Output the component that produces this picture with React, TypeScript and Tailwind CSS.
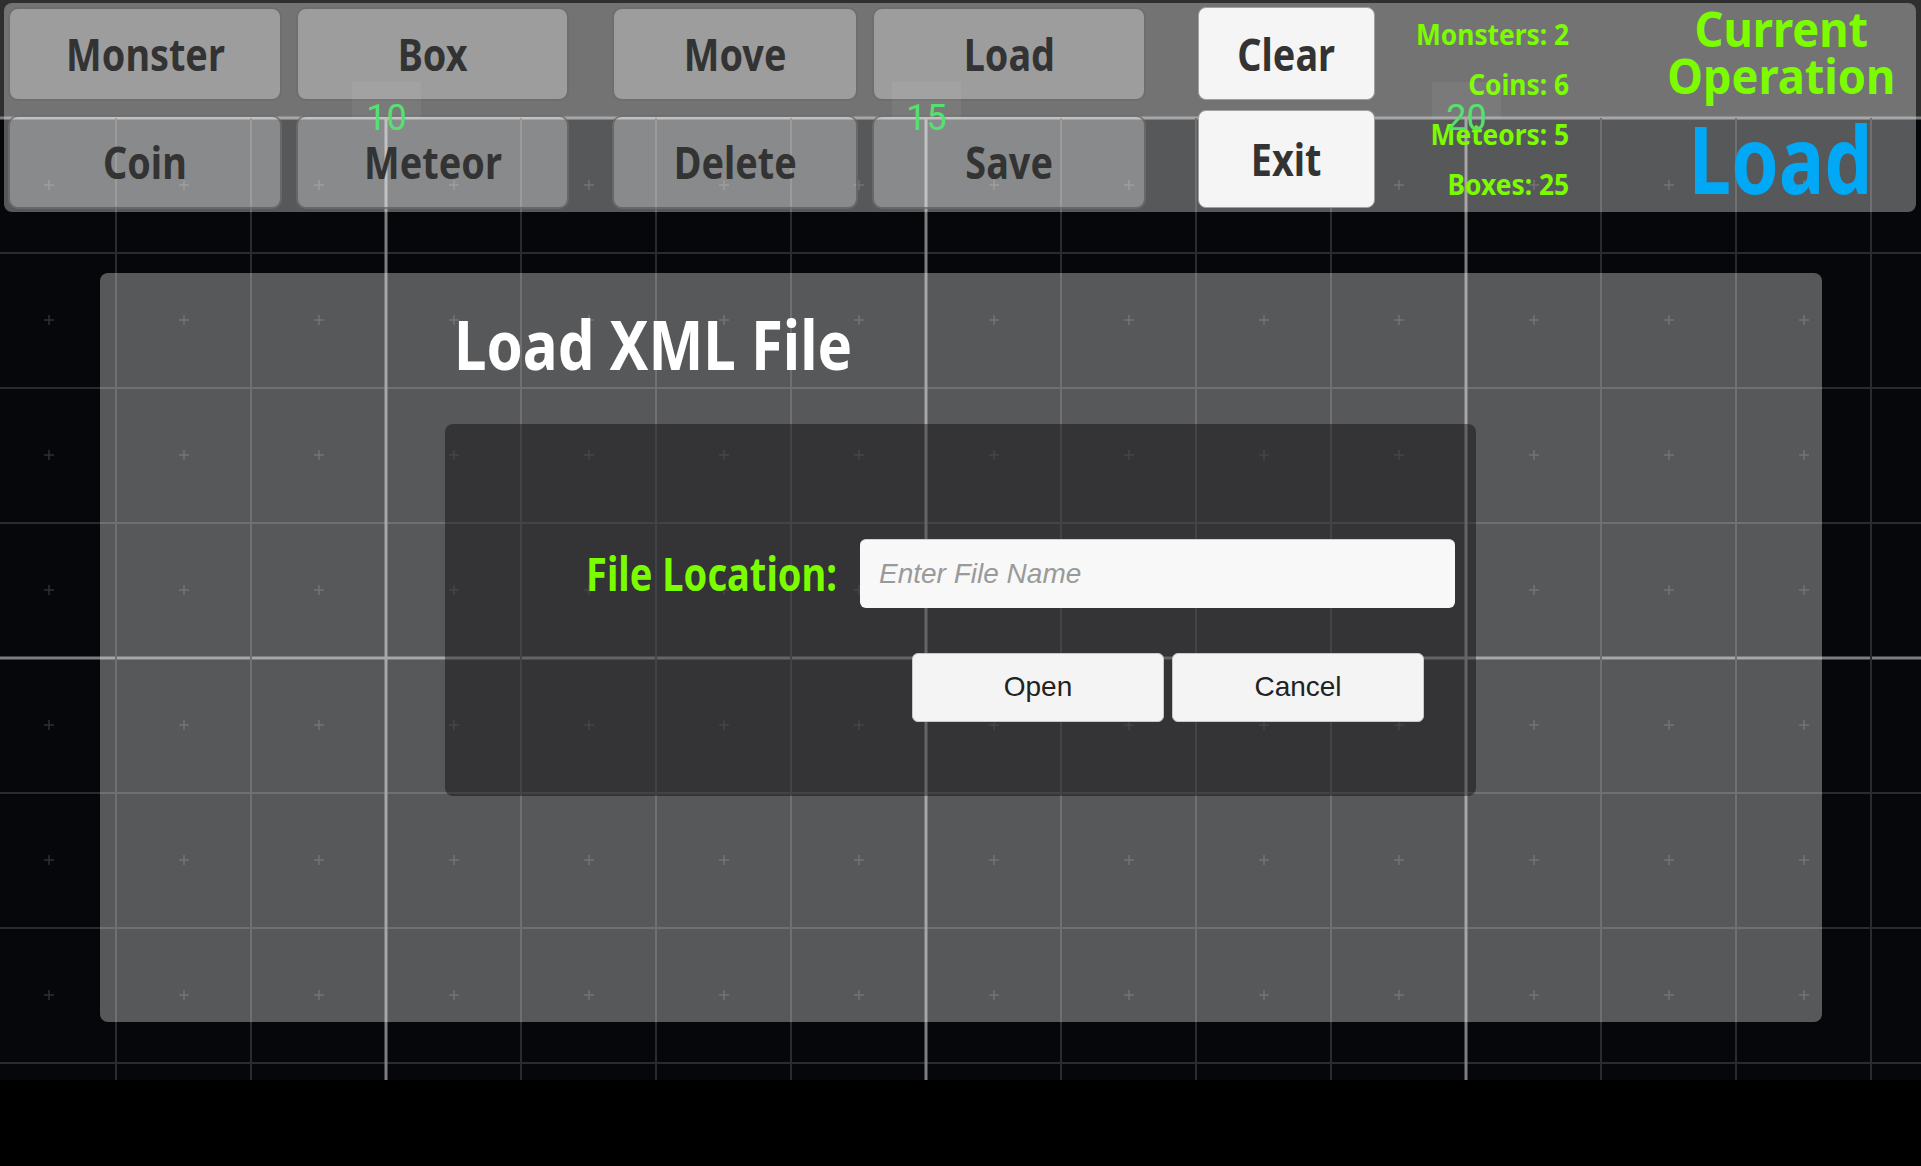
import React from 'react';

const CELL = 135;

function GridCanvas() {
  const vx = Array.from({ length: 14 }, (_, i) => 116 + i * CELL);
  const hy = Array.from({ length: 8 }, (_, i) => 118 + i * CELL);
  const px = Array.from({ length: 14 }, (_, i) => 49 + i * CELL);
  const py = Array.from({ length: 7 }, (_, i) => 185 + i * CELL);

  return (
    <svg className="absolute left-0 top-0" width={1921} height={1080}>
      <rect x={0} y={0} width={1921} height={118} fill="#2f2f2f" />
      <rect x={0} y={118} width={1921} height={962} fill="#05070a" />
      {py.map((y) =>
        px.map((x) => (
          <path
            key={`${x}-${y}`}
            d={`M${x - 5} ${y}h10M${x} ${y - 5}v10`}
            stroke="#303032"
            strokeWidth={1.5}
          />
        ))
      )}
      {hy.map((y, i) => (
        <line
          key={`h${y}`}
          x1={0}
          x2={1921}
          y1={y}
          y2={y}
          stroke={i % 4 === 0 ? '#7d7d7d' : '#2a2b2d'}
          strokeWidth={i % 4 === 0 ? 3 : 2}
        />
      ))}
      {vx.map((x, i) => (
        <line
          key={`v${x}`}
          x1={x}
          x2={x}
          y1={118}
          y2={1080}
          stroke={i % 4 === 2 ? '#7d7d7d' : '#2a2b2d'}
          strokeWidth={i % 4 === 2 ? 3 : 2}
        />
      ))}
    </svg>
  );
}

function ToolButton({ label, className = '' }: { label: string; className?: string }) {
  return (
    <button
      className={`flex h-[94px] items-center justify-center rounded-[10px] border-2 border-[#5a5a5a]/70 bg-white/30 font-['Noto_Sans',sans-serif] text-[45px] font-bold text-[#333333] ${className}`}
    >
      <span className="inline-block scale-x-[0.84]">{label}</span>
    </button>
  );
}

function ActionButton({ label, className = '' }: { label: string; className?: string }) {
  return (
    <button
      className={`flex items-center justify-center rounded-[8px] border border-[#a0a0a0] bg-[#f5f5f5] font-['Noto_Sans',sans-serif] text-[45px] font-bold text-[#333333] ${className}`}
    >
      <span className="inline-block scale-x-[0.84]">{label}</span>
    </button>
  );
}

const axisLabels = [
  { value: '10', left: 'left-[352px]' },
  { value: '15', left: 'left-[892px]' },
  { value: '20', left: 'left-[1432px]' },
];

function Toolbar() {
  return (
    <div className="absolute left-[4px] top-[3px] flex h-[209px] w-[1912px] items-start rounded-[8px] bg-white/[0.33] pl-[4px] pt-[4px]">
      {/* object tools */}
      <div className="grid grid-cols-[274px_273px] gap-[14px]">
        <ToolButton label="Monster" />
        <ToolButton label="Box" />
        <ToolButton label="Coin" />
        <ToolButton label="Meteor" />
      </div>

      {/* edit tools */}
      <div className="ml-[43px] grid grid-cols-[246px_274px] gap-[14px]">
        <ToolButton label="Move" />
        <ToolButton label="Load" />
        <ToolButton label="Delete" />
        <ToolButton label="Save" />
      </div>

      <div className="ml-[52px] flex w-[177px] flex-col">
        <ActionButton label="Clear" className="h-[93px]" />
        <ActionButton label="Exit" className="mt-[10px] h-[98px]" />
      </div>

      {/* counters */}
      <div className="mt-[2px] flex w-[194px] flex-col text-right font-['Noto_Sans',sans-serif] text-[28px] font-bold leading-[50px] text-[#7cfc00]">
        <span className="block origin-right scale-x-[0.94]">Monsters: 2</span>
        <span className="block origin-right scale-x-[0.94]">Coins: 6</span>
        <span className="block origin-right scale-x-[0.94]">Meteors: 5</span>
        <span className="block origin-right scale-x-[0.94]">Boxes: 25</span>
      </div>

      <div className="ml-[77px] -mt-[2px] flex w-[270px] flex-col items-center text-center font-['Noto_Sans',sans-serif] font-bold">
        <span className="inline-block scale-x-[0.94] text-[48px] leading-[47px] text-[#7cfc00]">Current</span>
        <span className="inline-block scale-x-[0.94] text-[48px] leading-[47px] text-[#7cfc00]">Operation</span>
        <span className="mt-[12px] inline-block scale-x-[0.81] text-[94px] leading-[94px] text-[#00a8f5]">Load</span>
      </div>
    </div>
  );
}

function LoadDialog() {
  return (
    <div className="absolute left-[100px] top-[273px] flex h-[749px] w-[1722px] flex-col rounded-[8px] bg-white/[0.33]">
      <h1 className="ml-[354px] mt-[37px] origin-left scale-x-[0.855] font-['Noto_Sans',sans-serif] text-[68px] font-bold leading-[68px] text-white">
        Load XML File
      </h1>

      <div className="ml-[345px] mt-[46px] flex h-[372px] w-[1031px] flex-col rounded-[8px] bg-black/40">
        <div className="mt-[114px] flex items-center">
          <label className="w-[392px] origin-right scale-x-[0.81] text-right font-['Noto_Sans',sans-serif] text-[47px] font-bold text-[#7cfc00]">
            File Location:
          </label>
          <input
            placeholder="Enter File Name"
            className="ml-[23px] h-[69px] w-[595px] rounded-[6px] border-t border-[#d0d0d0] bg-[#f8f8f8] px-[19px] font-['Liberation_Sans',sans-serif] text-[28px] text-[#222] outline-none placeholder:italic placeholder:text-[#9a9a9a]"
          />
        </div>
        <div className="ml-[467px] mt-[44px] flex gap-[8px]">
          <button className="h-[69px] w-[252px] rounded-[6px] border border-[#c8c8c8] bg-[#f4f4f4] font-['Liberation_Sans',sans-serif] text-[28px] text-[#222]">
            Open
          </button>
          <button className="h-[69px] w-[252px] rounded-[6px] border border-[#c8c8c8] bg-[#f4f4f4] font-['Liberation_Sans',sans-serif] text-[28px] text-[#222]">
            Cancel
          </button>
        </div>
      </div>
    </div>
  );
}

export default function App() {
  return (
    <div className="relative h-[1166px] w-full overflow-hidden bg-black">
      <GridCanvas />
      <LoadDialog />
      <Toolbar />

      {/* axis markers drawn over the HUD */}
      {axisLabels.map((a) => (
        <div key={a.value} className={`absolute top-[82px] h-[36px] w-[69px] bg-white/[0.05] ${a.left}`}>
          <span className="absolute left-0 right-0 top-[18px] text-center font-['Roboto',sans-serif] text-[36px] font-normal leading-[36px] text-[#55e070]">
            {a.value}
          </span>
        </div>
      ))}
    </div>
  );
}
